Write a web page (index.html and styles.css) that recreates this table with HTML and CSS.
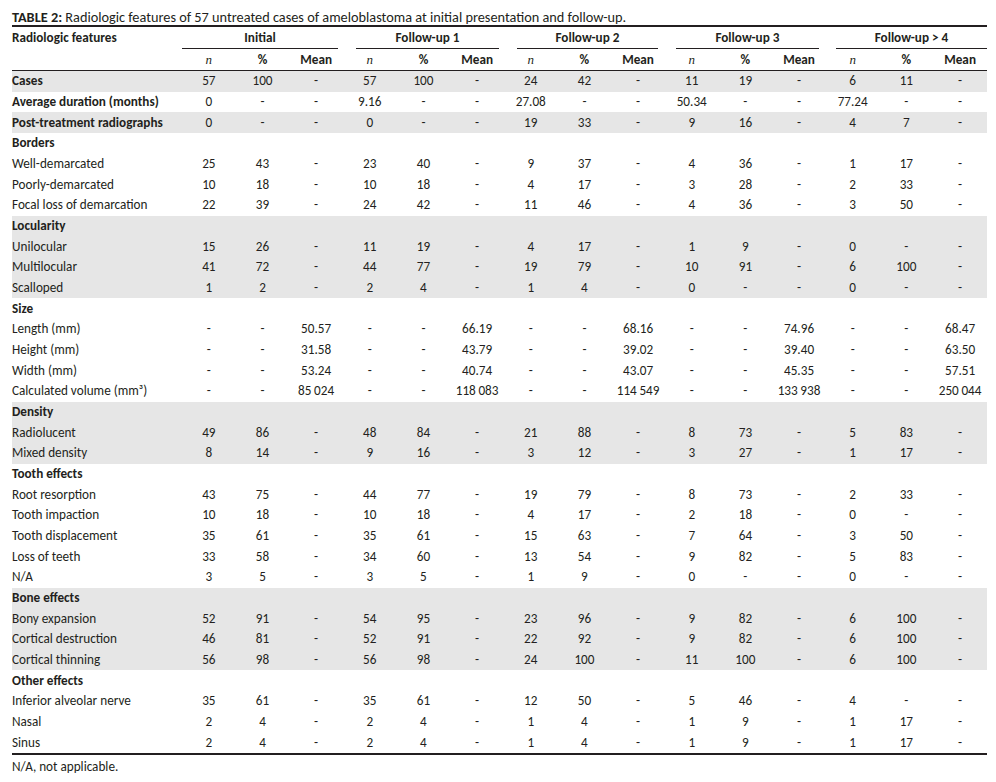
FILE: index.html
```html
<!DOCTYPE html>
<html lang="en">
<head>
<meta charset="utf-8">
<title>Table 2</title>
<link rel="stylesheet" href="styles.css">
</head>
<body>
<div class="page">
  <p class="caption"><b>TABLE 2:</b> Radiologic features of 57 untreated cases of ameloblastoma at initial presentation and follow-up.</p>
  <table class="data">
    <colgroup>
      <col class="c-label">
      <col><col><col><col><col><col><col><col><col><col><col><col><col><col><col>
    </colgroup>
    <thead>
      <tr class="h1">
        <th class="lab">Radiologic features</th>
        <th colspan="3"><div class="grp g1">Initial</div></th>
        <th colspan="3"><div class="grp g2">Follow-up 1</div></th>
        <th colspan="3"><div class="grp g3">Follow-up 2</div></th>
        <th colspan="3"><div class="grp g4">Follow-up 3</div></th>
        <th colspan="3"><div class="grp g5">Follow-up &gt; 4</div></th>
      </tr>
      <tr class="h2">
        <th></th>
        <th class="it">n</th><th>%</th><th>Mean</th>
        <th class="it">n</th><th>%</th><th>Mean</th>
        <th class="it">n</th><th>%</th><th>Mean</th>
        <th class="it">n</th><th>%</th><th>Mean</th>
        <th class="it">n</th><th>%</th><th>Mean</th>
      </tr>
    </thead>
    <tbody>
      <tr class="shade"><td class="bold">Cases</td><td>57</td><td>100</td><td>-</td><td>57</td><td>100</td><td>-</td><td>24</td><td>42</td><td>-</td><td>11</td><td>19</td><td>-</td><td>6</td><td>11</td><td>-</td></tr>
      <tr><td class="bold">Average duration (months)</td><td>0</td><td>-</td><td>-</td><td>9.16</td><td>-</td><td>-</td><td>27.08</td><td>-</td><td>-</td><td>50.34</td><td>-</td><td>-</td><td>77.24</td><td>-</td><td>-</td></tr>
      <tr class="shade"><td class="bold">Post-treatment radiographs</td><td>0</td><td>-</td><td>-</td><td>0</td><td>-</td><td>-</td><td>19</td><td>33</td><td>-</td><td>9</td><td>16</td><td>-</td><td>4</td><td>7</td><td>-</td></tr>

      <tr><td class="bold" colspan="16">Borders</td></tr>
      <tr><td>Well-demarcated</td><td>25</td><td>43</td><td>-</td><td>23</td><td>40</td><td>-</td><td>9</td><td>37</td><td>-</td><td>4</td><td>36</td><td>-</td><td>1</td><td>17</td><td>-</td></tr>
      <tr><td>Poorly-demarcated</td><td>10</td><td>18</td><td>-</td><td>10</td><td>18</td><td>-</td><td>4</td><td>17</td><td>-</td><td>3</td><td>28</td><td>-</td><td>2</td><td>33</td><td>-</td></tr>
      <tr><td>Focal loss of demarcation</td><td>22</td><td>39</td><td>-</td><td>24</td><td>42</td><td>-</td><td>11</td><td>46</td><td>-</td><td>4</td><td>36</td><td>-</td><td>3</td><td>50</td><td>-</td></tr>

      <tr class="shade"><td class="bold" colspan="16">Locularity</td></tr>
      <tr class="shade"><td>Unilocular</td><td>15</td><td>26</td><td>-</td><td>11</td><td>19</td><td>-</td><td>4</td><td>17</td><td>-</td><td>1</td><td>9</td><td>-</td><td>0</td><td>-</td><td>-</td></tr>
      <tr class="shade"><td>Multilocular</td><td>41</td><td>72</td><td>-</td><td>44</td><td>77</td><td>-</td><td>19</td><td>79</td><td>-</td><td>10</td><td>91</td><td>-</td><td>6</td><td>100</td><td>-</td></tr>
      <tr class="shade"><td>Scalloped</td><td>1</td><td>2</td><td>-</td><td>2</td><td>4</td><td>-</td><td>1</td><td>4</td><td>-</td><td>0</td><td>-</td><td>-</td><td>0</td><td>-</td><td>-</td></tr>

      <tr><td class="bold" colspan="16">Size</td></tr>
      <tr><td>Length (mm)</td><td>-</td><td>-</td><td>50.57</td><td>-</td><td>-</td><td>66.19</td><td>-</td><td>-</td><td>68.16</td><td>-</td><td>-</td><td>74.96</td><td>-</td><td>-</td><td>68.47</td></tr>
      <tr><td>Height (mm)</td><td>-</td><td>-</td><td>31.58</td><td>-</td><td>-</td><td>43.79</td><td>-</td><td>-</td><td>39.02</td><td>-</td><td>-</td><td>39.40</td><td>-</td><td>-</td><td>63.50</td></tr>
      <tr><td>Width (mm)</td><td>-</td><td>-</td><td>53.24</td><td>-</td><td>-</td><td>40.74</td><td>-</td><td>-</td><td>43.07</td><td>-</td><td>-</td><td>45.35</td><td>-</td><td>-</td><td>57.51</td></tr>
      <tr><td>Calculated volume (mm³)</td><td>-</td><td>-</td><td>85&thinsp;024</td><td>-</td><td>-</td><td>118&thinsp;083</td><td>-</td><td>-</td><td>114&thinsp;549</td><td>-</td><td>-</td><td>133&thinsp;938</td><td>-</td><td>-</td><td>250&thinsp;044</td></tr>

      <tr class="shade"><td class="bold" colspan="16">Density</td></tr>
      <tr class="shade"><td>Radiolucent</td><td>49</td><td>86</td><td>-</td><td>48</td><td>84</td><td>-</td><td>21</td><td>88</td><td>-</td><td>8</td><td>73</td><td>-</td><td>5</td><td>83</td><td>-</td></tr>
      <tr class="shade"><td>Mixed density</td><td>8</td><td>14</td><td>-</td><td>9</td><td>16</td><td>-</td><td>3</td><td>12</td><td>-</td><td>3</td><td>27</td><td>-</td><td>1</td><td>17</td><td>-</td></tr>

      <tr><td class="bold" colspan="16">Tooth effects</td></tr>
      <tr><td>Root resorption</td><td>43</td><td>75</td><td>-</td><td>44</td><td>77</td><td>-</td><td>19</td><td>79</td><td>-</td><td>8</td><td>73</td><td>-</td><td>2</td><td>33</td><td>-</td></tr>
      <tr><td>Tooth impaction</td><td>10</td><td>18</td><td>-</td><td>10</td><td>18</td><td>-</td><td>4</td><td>17</td><td>-</td><td>2</td><td>18</td><td>-</td><td>0</td><td>-</td><td>-</td></tr>
      <tr><td>Tooth displacement</td><td>35</td><td>61</td><td>-</td><td>35</td><td>61</td><td>-</td><td>15</td><td>63</td><td>-</td><td>7</td><td>64</td><td>-</td><td>3</td><td>50</td><td>-</td></tr>
      <tr><td>Loss of teeth</td><td>33</td><td>58</td><td>-</td><td>34</td><td>60</td><td>-</td><td>13</td><td>54</td><td>-</td><td>9</td><td>82</td><td>-</td><td>5</td><td>83</td><td>-</td></tr>
      <tr><td>N/A</td><td>3</td><td>5</td><td>-</td><td>3</td><td>5</td><td>-</td><td>1</td><td>9</td><td>-</td><td>0</td><td>-</td><td>-</td><td>0</td><td>-</td><td>-</td></tr>

      <tr class="shade"><td class="bold" colspan="16">Bone effects</td></tr>
      <tr class="shade"><td>Bony expansion</td><td>52</td><td>91</td><td>-</td><td>54</td><td>95</td><td>-</td><td>23</td><td>96</td><td>-</td><td>9</td><td>82</td><td>-</td><td>6</td><td>100</td><td>-</td></tr>
      <tr class="shade"><td>Cortical destruction</td><td>46</td><td>81</td><td>-</td><td>52</td><td>91</td><td>-</td><td>22</td><td>92</td><td>-</td><td>9</td><td>82</td><td>-</td><td>6</td><td>100</td><td>-</td></tr>
      <tr class="shade"><td>Cortical thinning</td><td>56</td><td>98</td><td>-</td><td>56</td><td>98</td><td>-</td><td>24</td><td>100</td><td>-</td><td>11</td><td>100</td><td>-</td><td>6</td><td>100</td><td>-</td></tr>

      <tr><td class="bold" colspan="16">Other effects</td></tr>
      <tr><td>Inferior alveolar nerve</td><td>35</td><td>61</td><td>-</td><td>35</td><td>61</td><td>-</td><td>12</td><td>50</td><td>-</td><td>5</td><td>46</td><td>-</td><td>4</td><td>-</td><td>-</td></tr>
      <tr><td>Nasal</td><td>2</td><td>4</td><td>-</td><td>2</td><td>4</td><td>-</td><td>1</td><td>4</td><td>-</td><td>1</td><td>9</td><td>-</td><td>1</td><td>17</td><td>-</td></tr>
      <tr><td>Sinus</td><td>2</td><td>4</td><td>-</td><td>2</td><td>4</td><td>-</td><td>1</td><td>4</td><td>-</td><td>1</td><td>9</td><td>-</td><td>1</td><td>17</td><td>-</td></tr>
    </tbody>
  </table>
  <p class="note">N/A, not applicable.</p>
</div>
</body>
</html>
```

FILE: styles.css
```css
html, body {
  margin: 0;
  padding: 0;
  background: #ffffff;
}

body {
  font-family: Carlito, Lato, "Open Sans", sans-serif;
  color: #231f20;
}

.page {
  width: 975px;
  padding: 0 0 0 12px;
}

.caption {
  margin: 0;
  padding-top: 9px;
  font-size: 14.3px;
  line-height: 16px;
  border-bottom: 2px solid #231f20;
}

.caption b {
  font-weight: 700;
}

.data {
  width: 975px;
  table-layout: fixed;
  border-collapse: collapse;
  font-size: 13.2px;
  border-bottom: 2px solid #231f20;
}

.c-label {
  width: 170px;
}

.data th,
.data td {
  padding: 0;
  text-align: center;
  vertical-align: middle;
  white-space: nowrap;
  line-height: 14px;
}

.data th {
  font-weight: 700;
}

.data .lab {
  text-align: left;
}

.h1 th {
  padding-top: 4px;
  vertical-align: top;
}

.h1 .lab {
  padding-bottom: 4px;
}

.grp {
  padding-bottom: 3px;
  border-bottom: 1px solid #231f20;
}

.g1 { margin: 0 5px 0 0; }
.g2 { margin: 0 5px 0 13px; }
.g3 { margin: 0 7px 0 13px; }
.g4 { margin: 0 7px 0 11px; }
.g5 { margin: 0 0 0 10px; }

.h2 th {
  height: 21px;
  border-bottom: 1px solid #231f20;
}

.h2 .it {
  font-family: "Liberation Serif", serif;
  font-style: italic;
  font-weight: 400;
  font-size: 13px;
}

.data tbody td {
  height: 20.68px;
}

.data tbody td:first-child {
  text-align: left;
}

.data .bold {
  font-weight: 700;
}

.shade td {
  background: #e6e6e6;
}

.note {
  margin: 5px 0 0 0;
  font-size: 13.2px;
  line-height: 14px;
}
```
